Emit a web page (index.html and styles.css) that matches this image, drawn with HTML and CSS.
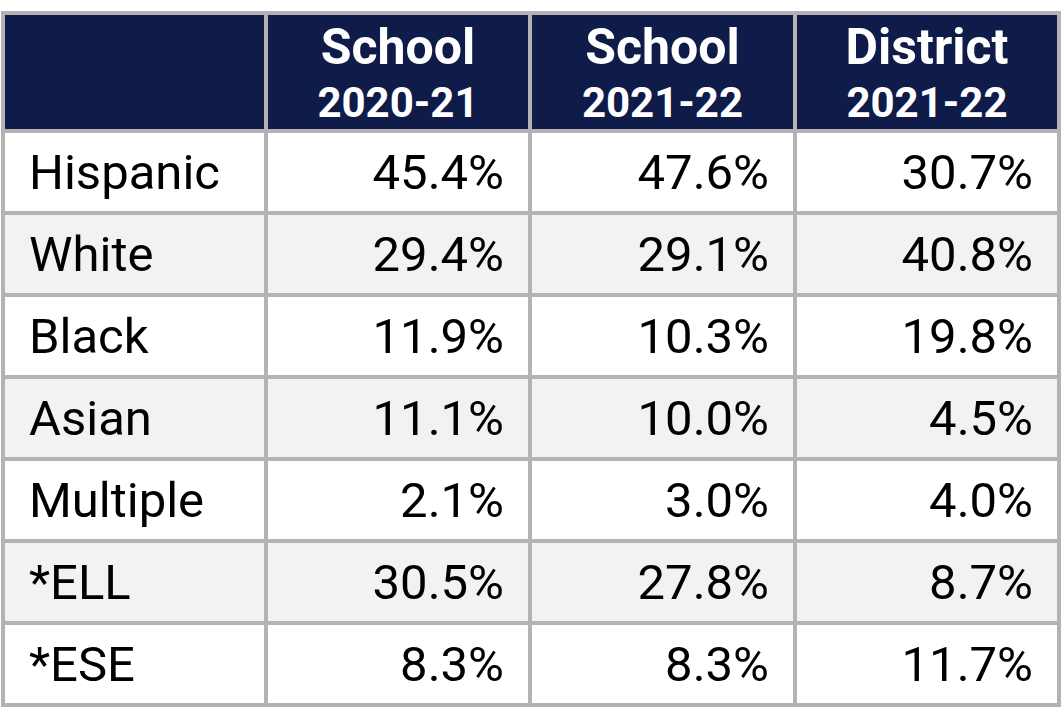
FILE: index.html
```html
<!DOCTYPE html>
<html>
<head>
<meta charset="utf-8">
<link rel="stylesheet" href="styles.css">
</head>
<body>
<div class="table">
  <div class="th"></div>
  <div class="th"><span class="t1">School</span><span class="t2">2020-21</span></div>
  <div class="th"><span class="t1">School</span><span class="t2">2021-22</span></div>
  <div class="th"><span class="t1">District</span><span class="t2">2021-22</span></div>

  <div class="td label">Hispanic</div><div class="td num">45.4%</div><div class="td num">47.6%</div><div class="td num">30.7%</div>
  <div class="td label alt">White</div><div class="td num alt">29.4%</div><div class="td num alt">29.1%</div><div class="td num alt">40.8%</div>
  <div class="td label">Black</div><div class="td num">11.9%</div><div class="td num">10.3%</div><div class="td num">19.8%</div>
  <div class="td label alt">Asian</div><div class="td num alt">11.1%</div><div class="td num alt">10.0%</div><div class="td num alt">4.5%</div>
  <div class="td label">Multiple</div><div class="td num">2.1%</div><div class="td num">3.0%</div><div class="td num">4.0%</div>
  <div class="td label alt">*ELL</div><div class="td num alt">30.5%</div><div class="td num alt">27.8%</div><div class="td num alt">8.7%</div>
  <div class="td label">*ESE</div><div class="td num">8.3%</div><div class="td num">8.3%</div><div class="td num">11.7%</div>
</div>
</body>
</html>
```
FILE: styles.css
```css
html, body {
  margin: 0;
  padding: 0;
  background: #ffffff;
}
body {
  padding: 11px 0 0 1px;
  font-family: Roboto, "Liberation Sans", sans-serif;
}
.table {
  width: 1060px;
  box-sizing: border-box;
  display: grid;
  grid-template-columns: 259px 260px 261px 260px;
  grid-template-rows: 114px repeat(7, 78px);
  gap: 4px;
  padding: 4px;
  background: #b3b3b3;
}
.th {
  background: #0f1c4a;
  color: #ffffff;
  font-weight: 700;
  display: flex;
  flex-direction: column;
  align-items: center;
  justify-content: flex-start;
  padding-top: 7px;
}
.t1 {
  font-size: 50px;
  line-height: 50px;
}
.t2 {
  font-size: 42px;
  line-height: 61px;
}
.td {
  background: #ffffff;
  color: #000000;
  font-size: 49px;
  display: flex;
  align-items: center;
  padding: 0 24px;
}
.td.alt {
  background: #f2f2f2;
}
.label {
  justify-content: flex-start;
}
.num {
  justify-content: flex-end;
}
```
